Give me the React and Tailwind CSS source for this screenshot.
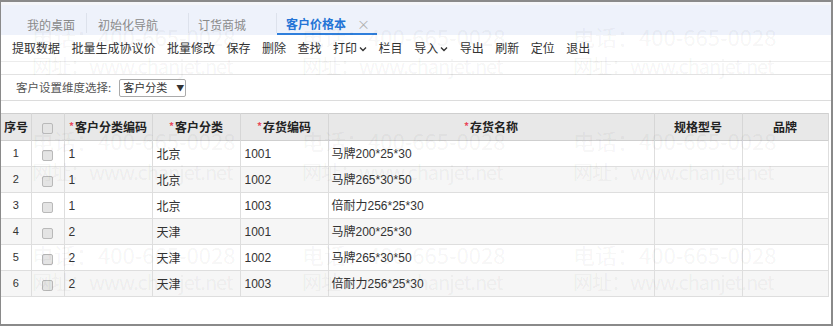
import React from 'react';

const tools = [
  { label: '提取数据' },
  { label: '批量生成协议价' },
  { label: '批量修改' },
  { label: '保存' },
  { label: '删除' },
  { label: '查找' },
  { label: '打印', menu: true },
  { label: '栏目' },
  { label: '导入', menu: true },
  { label: '导出' },
  { label: '刷新' },
  { label: '定位' },
  { label: '退出' },
];

const rows = [
  { no: 1, code: '1', cls: '北京', inv: '1001', name: '马牌200*25*30' },
  { no: 2, code: '1', cls: '北京', inv: '1002', name: '马牌265*30*50' },
  { no: 3, code: '1', cls: '北京', inv: '1003', name: '倍耐力256*25*30' },
  { no: 4, code: '2', cls: '天津', inv: '1001', name: '马牌200*25*30' },
  { no: 5, code: '2', cls: '天津', inv: '1002', name: '马牌265*30*50' },
  { no: 6, code: '2', cls: '天津', inv: '1003', name: '倍耐力256*25*30' },
];

// watermark rows: phone / site, repeated across
const marks = [
  { top: 20, site: false },
  { top: 50, site: true },
  { top: 124, site: false },
  { top: 156, site: true },
  { top: 238, site: false },
  { top: 266, site: true },
];

function Chevron() {
  return (
    <svg width="8" height="6" viewBox="0 0 8 6" className="ml-[2px] mt-[1px]">
      <path d="M1 1.5 L4 4.5 L7 1.5" fill="none" stroke="#333" strokeWidth="1.4" />
    </svg>
  );
}

function Check() {
  return <span className="inline-block w-[11px] h-[11px] rounded-[2px] border border-[#b9b9b9] bg-[#e4e4e4] align-middle" />;
}

function Req({ children }) {
  return (
    <span>
      <span className="text-[#e8475b] text-[10px] align-top mr-[1px]">*</span>
      {children}
    </span>
  );
}

export default function App() {
  return (
    <div className="relative w-[833px] h-[326px] overflow-hidden bg-white border-t-2 border-l border-r-2 border-b-2 border-[#8a8a8a] font-['Noto_Sans_CJK_SC',sans-serif] text-[#333]">
      {/* tabs */}
      <div className="h-[33px] bg-[#eef2fb] border-t-[3px] border-[#f5f6f9] flex items-stretch text-[12px] pt-[8px]">
        <div className="w-[86px] pl-[26px] pt-[3px] flex items-center text-[#8a8a8a] border-r border-[#dde2ec] mb-[2px]">我的桌面</div>
        <div className="w-[102px] pl-[11px] pt-[3px] flex items-center text-[#8a8a8a] border-r border-[#dde2ec] mb-[2px]">初始化导航</div>
        <div className="w-[88px] pl-[9px] pt-[3px] flex items-center text-[#8a8a8a] border-r border-[#dde2ec] mb-[2px]">订货商城</div>
        <div className="w-[100px] pl-[9px] pt-[1px] flex items-center border-b-2 border-[#2f7fdc] text-[#2474d6] font-bold">
          客户价格本
          <span className="ml-[11px] text-[#b0b0b0] font-normal text-[13px]">×</span>
        </div>
      </div>

      {/* toolbar */}
      <div className="h-[27px] flex items-center gap-[11.5px] pl-[11px] text-[12px] text-[#333] border-b border-[#ececec]">
        {tools.map((t) => (
          <span key={t.label} className="flex items-center">
            {t.label}
            {t.menu && <Chevron />}
          </span>
        ))}
      </div>

      <div className="h-[13px] border-b border-[#e2e2e2]" />

      {/* filter */}
      <div className="h-[26px] flex items-center pl-[15px] text-[11.5px] text-[#555] border-b border-[#dcdcdc]">
        <span>客户设置维度选择:</span>
        <span className="ml-[8px] h-[18px] w-[67px] border border-[#aaa] rounded-[2px] flex items-center pl-[3px] text-[11px] text-[#333]">
          客户分类
          <span className="ml-[9px] text-[8px]">▼</span>
        </span>
      </div>

      <div className="h-[12px]" />

      {/* grid */}
      <table className="table-fixed border-collapse w-[827px] text-[12px]">
        <colgroup>
          <col className="w-[30px]" />
          <col className="w-[33px]" />
          <col className="w-[88px]" />
          <col className="w-[88px]" />
          <col className="w-[88px]" />
          <col className="w-[326px]" />
          <col className="w-[88px]" />
          <col className="w-[86px]" />
        </colgroup>
        <thead>
          <tr className="h-[27px] bg-[#e8e8e8] font-bold text-[#222] border-t border-b border-[#cfcfcf]">
            <th className="border-r border-[#d6d6d6] text-left pl-[3px] font-bold">序号</th>
            <th className="border-r border-[#d6d6d6] text-center"><Check /></th>
            <th className="border-r border-[#d6d6d6] text-center font-bold"><Req>客户分类编码</Req></th>
            <th className="border-r border-[#d6d6d6] text-center font-bold"><Req>客户分类</Req></th>
            <th className="border-r border-[#d6d6d6] text-center font-bold"><Req>存货编码</Req></th>
            <th className="border-r border-[#d6d6d6] text-center font-bold"><Req>存货名称</Req></th>
            <th className="border-r border-[#d6d6d6] text-center font-bold">规格型号</th>
            <th className="border-r border-[#d6d6d6] text-center font-bold">品牌</th>
          </tr>
        </thead>
        <tbody>
          {rows.map((r) => (
            <tr key={r.no} className={`h-[26px] border-b border-[#dedede] ${r.no % 2 === 0 ? 'bg-[#f6f6f6]' : 'bg-white'}`}>
              <td className="border-r border-[#dedede] text-center text-[11px] font-['Liberation_Sans',sans-serif]">{r.no}</td>
              <td className="border-r border-[#dedede] text-center"><Check /></td>
              <td className="border-r border-[#dedede] pl-[4px] font-['Liberation_Sans',sans-serif]">{r.code}</td>
              <td className="border-r border-[#dedede] pl-[4px]">{r.cls}</td>
              <td className="border-r border-[#dedede] pl-[4px] font-['Liberation_Sans','Noto_Sans_CJK_SC',sans-serif]">{r.inv}</td>
              <td className="border-r border-[#dedede] pl-[3px] font-['Liberation_Sans','Noto_Sans_CJK_SC',sans-serif]">{r.name}</td>
              <td className="border-r border-[#dedede]"></td>
              <td className="border-r border-[#dedede]"></td>
            </tr>
          ))}
        </tbody>
      </table>

      {/* watermark */}
      <div className="pointer-events-none absolute inset-0">
        {marks.map((m, i) =>
          [31, 301, 572].map((x) => (
            <span
              key={`${i}-${x}`}
              className={`absolute whitespace-nowrap leading-[28px] text-[rgba(0,0,0,0.055)] font-['Noto_Sans_CJK_SC',sans-serif] ${
                m.site ? 'text-[20px] tracking-[-1px]' : 'text-[22px]'
              }`}
              style={{ left: x, top: m.top }}
            >
              {m.site ? '网址：www.chanjet.net' : '电话：400-665-0028'}
            </span>
          ))
        )}
      </div>
    </div>
  );
}
